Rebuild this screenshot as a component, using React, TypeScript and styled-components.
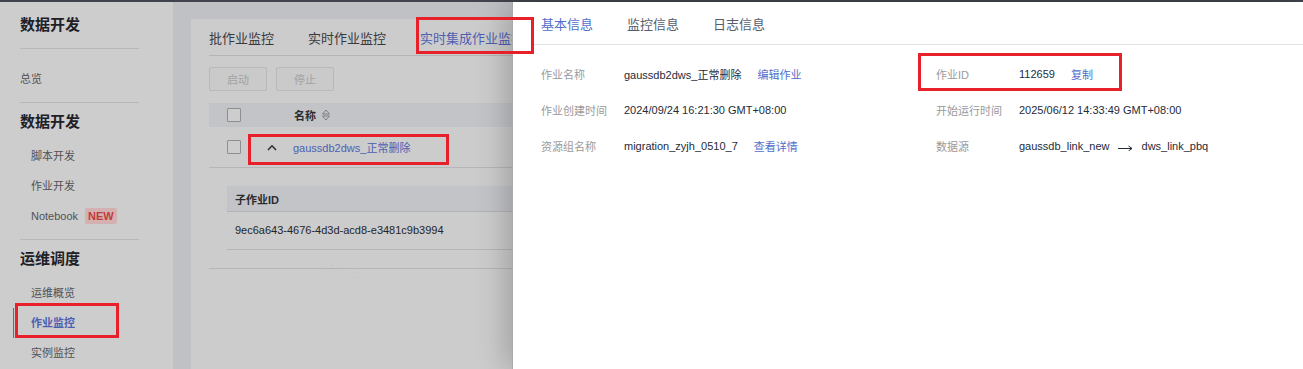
import React from "react";
import styled, { createGlobalStyle } from "styled-components";

const GlobalStyle = createGlobalStyle`
  html, body { margin: 0; padding: 0; background: #cccccc; }
  body { font-family: "Liberation Sans", "Noto Sans CJK SC", sans-serif; }
  * { box-sizing: border-box; }
`;

const Page = styled.div`
  position: relative;
  width: 1303px;
  height: 369px;
  overflow: hidden;
  display: flex;
  flex-direction: column;
`;

const TopLine = styled.div`
  flex: none;
  height: 2px;
  background: #41444c;
`;

const Body = styled.div`
  flex: 1;
  display: flex;
  min-height: 0;
`;

/* ---------- Sidebar ---------- */
const Sidebar = styled.nav`
  flex: none;
  width: 173px;
  background: #cdcdcd;
  padding: 0 34px 0 20px;
  display: flex;
  flex-direction: column;
`;

const AppTitle = styled.div`
  height: 46px;
  line-height: 46px;
  font-size: 15px;
  font-weight: 700;
  color: #1e2026;
`;

const Divider = styled.div<{ $mt?: number }>`
  height: 1px;
  background: #b7b8bc;
  margin-top: ${(p) => p.$mt ?? 0}px;
`;

const SectionTitle = styled.div`
  height: 38px;
  line-height: 38px;
  font-size: 15px;
  font-weight: 700;
  color: #1e2026;
`;

const NavItem = styled.div<{ $indent?: boolean; $active?: boolean; $mt?: number }>`
  position: relative;
  height: 30px;
  line-height: 30px;
  margin-top: ${(p) => p.$mt ?? 0}px;
  padding-left: ${(p) => (p.$indent ? 11 : 0)}px;
  font-size: 11px;
  color: ${(p) => (p.$active ? "#4e5fb3" : "#505155")};
  font-weight: ${(p) => (p.$active ? 700 : 400)};
  display: flex;
  align-items: center;
  gap: 7px;
  &::before {
    content: "";
    display: ${(p) => (p.$active ? "block" : "none")};
    position: absolute;
    left: -7px;
    top: 0;
    bottom: 0;
    width: 1px;
    background: #5666b8;
  }
`;

const NewBadge = styled.span`
  display: inline-block;
  height: 16px;
  line-height: 16px;
  padding: 0 3px;
  border-radius: 2px;
  background: #d4b0b0;
  color: #c23b3b;
  font-size: 11px;
  font-weight: 700;
`;

/* ---------- Main card ---------- */
const Main = styled.main`
  flex: 1;
  background: #c0c1c5;
  padding: 17px 0 0 18px;
  min-width: 0;
`;

const Card = styled.section`
  position: relative;
  height: 100%;
  background: #cccccc;
  padding-left: 18px;
  overflow: hidden;
`;

const CardTabs = styled.div`
  height: 37px;
  border-bottom: 1px solid #b5b5b7;
  display: flex;
  align-items: center;
  gap: 34px;
  padding-top: 1px;
`;

const CardTab = styled.div<{ $active?: boolean }>`
  font-size: 13px;
  white-space: nowrap;
  color: ${(p) => (p.$active ? "#4f5fb2" : "#38393d")};
`;

const Toolbar = styled.div`
  margin-top: 11px;
  display: flex;
  gap: 9px;
`;

const GhostButton = styled.button`
  width: 58px;
  height: 24px;
  padding: 0;
  border: 1px solid #b9b9bb;
  border-radius: 2px;
  background: #cacaca;
  color: #a2a2a4;
  font-family: inherit;
  font-size: 11px;
`;

const Table = styled.div`
  margin-top: 12px;
`;

const HeadRow = styled.div`
  height: 24px;
  background: #c3c4c8;
  display: grid;
  grid-template-columns: 58px 1fr;
  align-items: center;
`;

const BodyRow = styled.div`
  height: 41px;
  border-bottom: 1px solid #b6b6b8;
  display: grid;
  grid-template-columns: 58px 1fr;
  align-items: center;
`;

const CheckCell = styled.div`
  padding-left: 18px;
  display: flex;
  align-items: center;
`;

const Checkbox = styled.span`
  width: 14px;
  height: 14px;
  border: 1px solid #8e8e90;
  border-radius: 1px;
  background: #cdcdcd;
`;

const HeadName = styled.div`
  padding-left: 27px;
  display: flex;
  align-items: center;
  gap: 5px;
  font-size: 11px;
  font-weight: 700;
  color: #2b2c30;
`;

const NameCell = styled.div`
  display: flex;
  align-items: center;
  gap: 16px;
`;

const RowLink = styled.span`
  font-size: 11px;
  color: #4e5fb2;
  white-space: nowrap;
`;

const Expanded = styled.div`
  padding: 18px 0 18px 18px;
  border-bottom: 1px solid #b6b6b8;
`;

const SubHead = styled.div`
  height: 26px;
  background: #c3c4c8;
  border-bottom: 1px solid #b2b3b6;
  display: flex;
  align-items: center;
  padding-left: 8px;
  font-size: 11px;
  font-weight: 700;
  color: #2b2c30;
`;

const SubRow = styled.div`
  height: 38px;
  border-bottom: 1px solid #b6b6b8;
  display: flex;
  align-items: center;
  padding-left: 8px;
  font-size: 11px;
  color: #242528;
  padding-bottom: 1px;
`;

const Watermark = styled.div<{ $x: number; $y: number }>`
  position: absolute;
  left: ${(p) => p.$x}px;
  top: ${(p) => p.$y}px;
  transform: rotate(11deg);
  transform-origin: left center;
  font-size: 12px;
  color: rgba(0, 0, 0, 0.03);
  white-space: nowrap;
  pointer-events: none;
`;

/* ---------- Drawer ---------- */
const Drawer = styled.aside`
  position: absolute;
  top: 2px;
  left: 512px;
  right: 0;
  bottom: 0;
  background: #ffffff;
  border-left: 1px solid #a9a9ab;
  box-shadow: -6px 0 28px rgba(0, 0, 0, 0.22);
  padding-left: 21px;
`;

const DrawerTabs = styled.div`
  height: 43px;
  border-bottom: 1px solid #e2e2e4;
  display: flex;
  align-items: center;
  gap: 34px;
  padding-left: 7px;
`;

const DrawerTab = styled.div<{ $active?: boolean }>`
  font-size: 13px;
  color: ${(p) => (p.$active ? "#526ecc" : "#575d6c")};
`;

const InfoGrid = styled.div`
  padding: 11px 0 0 7px;
  display: grid;
  grid-template-columns: 395px 1fr;
  grid-auto-rows: 36px;
`;

const InfoItem = styled.div`
  display: flex;
  align-items: center;
  font-size: 11px;
  white-space: nowrap;
`;

const InfoLabel = styled.span`
  width: 83px;
  flex: none;
  color: #9a9a9c;
`;

const InfoValue = styled.span`
  color: #252b3a;
`;

const InfoLink = styled.span`
  margin-left: 16px;
  color: #526ecc;
`;

const Arrow = styled.svg`
  margin: 2px 9px 0 8px;
`;

/* ---------- Annotations ---------- */
const Mark = styled.div<{ $x: number; $y: number; $w: number; $h: number }>`
  position: absolute;
  left: ${(p) => p.$x}px;
  top: ${(p) => p.$y}px;
  width: ${(p) => p.$w}px;
  height: ${(p) => p.$h}px;
  border: 3px solid #e8202a;
  pointer-events: none;
`;

const SortIcon = () => (
  <svg width="10" height="14" viewBox="0 0 10 14" fill="none">
    <path d="M1.5 6 L5 2 L8.5 6 Z" stroke="#7d7e82" strokeWidth="1" strokeLinejoin="round" />
    <path d="M1.5 8 L5 12 L8.5 8 Z" stroke="#7d7e82" strokeWidth="1" strokeLinejoin="round" />
  </svg>
);

const ChevronUp = () => (
  <svg width="10" height="7" viewBox="0 0 10 7" fill="none">
    <path d="M1 6 L5 1.8 L9 6" stroke="#2e2f33" strokeWidth="1.6" />
  </svg>
);

export default function App() {
  return (
    <>
      <GlobalStyle />
      <Page>
        <TopLine />
        <Body>
          <Sidebar>
            <AppTitle>数据开发</AppTitle>
            <Divider />
            <NavItem $mt={15}>总览</NavItem>
            <Divider $mt={8} />
            <SectionTitle>数据开发</SectionTitle>
            <NavItem $indent>脚本开发</NavItem>
            <NavItem $indent>作业开发</NavItem>
            <NavItem $indent>
              Notebook <NewBadge>NEW</NewBadge>
            </NavItem>
            <Divider $mt={8} />
            <SectionTitle>运维调度</SectionTitle>
            <NavItem $indent>运维概览</NavItem>
            <NavItem $indent $active>作业监控</NavItem>
            <NavItem $indent>实例监控</NavItem>
          </Sidebar>
          <Main>
            <Card>
              <CardTabs>
                <CardTab>批作业监控</CardTab>
                <CardTab>实时作业监控</CardTab>
                <CardTab $active>实时集成作业监控</CardTab>
              </CardTabs>
              <Toolbar>
                <GhostButton disabled>启动</GhostButton>
                <GhostButton disabled>停止</GhostButton>
              </Toolbar>
              <Table>
                <HeadRow>
                  <CheckCell>
                    <Checkbox />
                  </CheckCell>
                  <HeadName>
                    名称 <SortIcon />
                  </HeadName>
                </HeadRow>
                <BodyRow>
                  <CheckCell>
                    <Checkbox />
                  </CheckCell>
                  <NameCell>
                    <ChevronUp />
                    <RowLink>gaussdb2dws_正常删除</RowLink>
                  </NameCell>
                </BodyRow>
                <Expanded>
                  <SubHead>子作业ID</SubHead>
                  <SubRow>9ec6a643-4676-4d3d-acd8-e3481c9b3994</SubRow>
                </Expanded>
              </Table>
              <Watermark $x={32} $y={222}>l_dlf_l00341563 2025/7/11</Watermark>
              <Watermark $x={262} $y={222}>l_dlf_l00341563 2025/7/11</Watermark>
            </Card>
          </Main>
        </Body>

        <Drawer>
          <DrawerTabs>
            <DrawerTab $active>基本信息</DrawerTab>
            <DrawerTab>监控信息</DrawerTab>
            <DrawerTab>日志信息</DrawerTab>
          </DrawerTabs>
          <InfoGrid>
            <InfoItem>
              <InfoLabel>作业名称</InfoLabel>
              <InfoValue>gaussdb2dws_正常删除</InfoValue>
              <InfoLink>编辑作业</InfoLink>
            </InfoItem>
            <InfoItem>
              <InfoLabel>作业ID</InfoLabel>
              <InfoValue>112659</InfoValue>
              <InfoLink>复制</InfoLink>
            </InfoItem>
            <InfoItem>
              <InfoLabel>作业创建时间</InfoLabel>
              <InfoValue>2024/09/24 16:21:30 GMT+08:00</InfoValue>
            </InfoItem>
            <InfoItem>
              <InfoLabel>开始运行时间</InfoLabel>
              <InfoValue>2025/06/12 14:33:49 GMT+08:00</InfoValue>
            </InfoItem>
            <InfoItem>
              <InfoLabel>资源组名称</InfoLabel>
              <InfoValue>migration_zyjh_0510_7</InfoValue>
              <InfoLink>查看详情</InfoLink>
            </InfoItem>
            <InfoItem>
              <InfoLabel>数据源</InfoLabel>
              <InfoValue>gaussdb_link_new</InfoValue>
              <Arrow width="15" height="7" viewBox="0 0 15 7" fill="none">
                <path d="M0 4.5 H14" stroke="#252b3a" strokeWidth="1" />
                <path d="M10.5 2 L14 4.5 L10.5 7" stroke="#252b3a" strokeWidth="1" fill="none" />
              </Arrow>
              <InfoValue>dws_link_pbq</InfoValue>
            </InfoItem>
          </InfoGrid>
        </Drawer>

        <Mark $x={15} $y={303} $w={104} $h={35} />
        <Mark $x={416} $y={17} $w={118} $h={37} />
        <Mark $x={248} $y={134} $w={201} $h={31} />
        <Mark $x={918} $y={53} $w={204} $h={38} />
      </Page>
    </>
  );
}
